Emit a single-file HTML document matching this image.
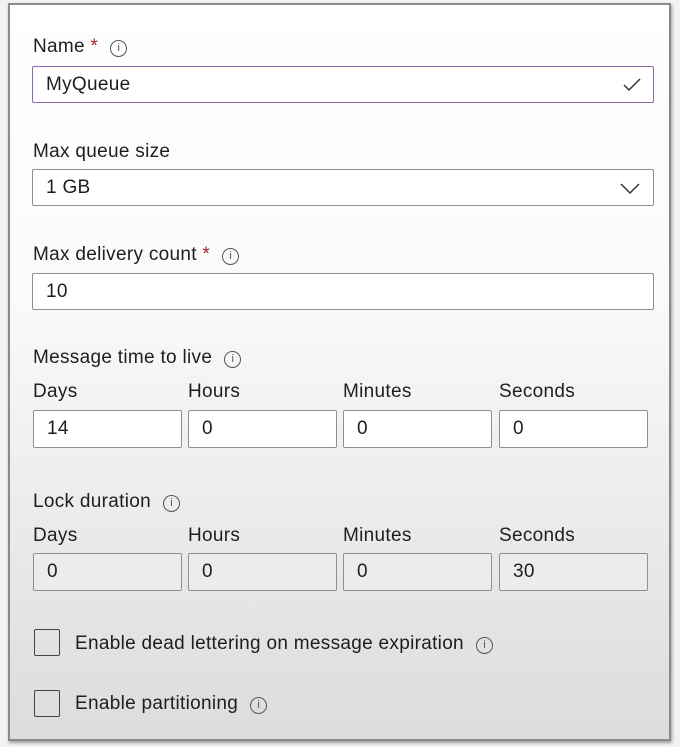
<!DOCTYPE html>
<html><head><style>
*{margin:0;padding:0;box-sizing:border-box}
body{width:680px;height:747px;background:#f2f2f2;position:relative;overflow:hidden;font-family:"Liberation Sans",sans-serif;color:#1e1e1e;font-size:19px;letter-spacing:0.3px}
.panel{position:absolute;left:8px;top:3px;width:663px;height:738px;border:2px solid #8a8a8a;background:linear-gradient(#fff 0%,#fafafa 40%,#e6e6e6 80%,#dcdcdc 100%);box-shadow:1px 2px 3px rgba(0,0,0,.35)}
.t{position:absolute;line-height:22px;white-space:nowrap}
.req{color:#a4262c}
.i{display:inline-block;width:17px;height:17px;border:1.3px solid #555;border-radius:50%;font-size:11px;line-height:14px;text-align:center;vertical-align:1px;margin-left:12px;color:#555;letter-spacing:0}
.box{position:absolute;border:1.5px solid #8f8f8f;border-radius:2px;background:#fff;padding-left:13px;line-height:35px}
.g{background:#ececec}
.cb{position:absolute;width:26px;height:27px;border:1.8px solid #444;border-radius:2px}
</style></head><body>
<div class="panel"></div>
<div class="t" style="left:33px;top:36px">Name <span class="req">*</span><span class="i">i</span></div>
<div class="box" style="left:32px;top:66px;width:622px;height:37px;border-color:#8b6aa8">MyQueue
<svg style="position:absolute;right:12px;top:11px" width="18" height="14"><path d="M1 7 L6 12 L17 1" fill="none" stroke="#333" stroke-width="1.5"/></svg></div>
<div class="t" style="left:33px;top:141px">Max queue size</div>
<div class="box" style="left:32px;top:169px;width:622px;height:37px">1 GB
<svg style="position:absolute;right:13px;top:13px" width="20" height="12"><path d="M1 1 L10 10 L19 1" fill="none" stroke="#333" stroke-width="1.5"/></svg></div>
<div class="t" style="left:33px;top:244px">Max delivery count <span class="req">*</span><span class="i">i</span></div>
<div class="box" style="left:32px;top:273px;width:622px;height:37px">10</div>
<div class="t" style="left:33px;top:347px">Message time to live<span class="i">i</span></div>
<div class="t" style="left:33px;top:381px">Days</div><div class="t" style="left:188px;top:381px">Hours</div><div class="t" style="left:343px;top:381px">Minutes</div><div class="t" style="left:499px;top:381px">Seconds</div>
<div class="box" style="left:33px;top:410px;width:149px;height:38px">14</div>
<div class="box" style="left:188px;top:410px;width:149px;height:38px">0</div>
<div class="box" style="left:343px;top:410px;width:149px;height:38px">0</div>
<div class="box" style="left:499px;top:410px;width:149px;height:38px">0</div>
<div class="t" style="left:33px;top:491px">Lock duration<span class="i">i</span></div>
<div class="t" style="left:33px;top:525px">Days</div><div class="t" style="left:188px;top:525px">Hours</div><div class="t" style="left:343px;top:525px">Minutes</div><div class="t" style="left:499px;top:525px">Seconds</div>
<div class="box g" style="left:33px;top:553px;width:149px;height:38px">0</div>
<div class="box g" style="left:188px;top:553px;width:149px;height:38px">0</div>
<div class="box g" style="left:343px;top:553px;width:149px;height:38px">0</div>
<div class="box g" style="left:499px;top:553px;width:149px;height:38px">30</div>
<div class="cb" style="left:34px;top:629px"></div>
<div class="t" style="left:75px;top:633px">Enable dead lettering on message expiration<span class="i">i</span></div>
<div class="cb" style="left:34px;top:690px"></div>
<div class="t" style="left:75px;top:693px">Enable partitioning<span class="i">i</span></div>
</body></html>
